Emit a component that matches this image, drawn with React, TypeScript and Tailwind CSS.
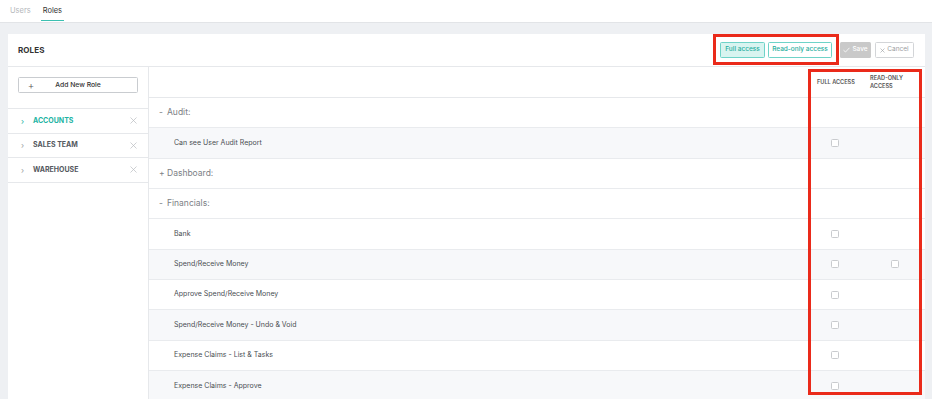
import React from "react";

const teal = "text-[#22b3a3]";

function Checkbox() {
  return <div className="w-[8px] h-[8px] border border-[#c9cbce] rounded-[1.5px] bg-white" />;
}

type Row = { label: string; kind: "group" | "item"; sign?: string; full?: boolean; read?: boolean; stripe?: boolean };

const rows: Row[] = [
  { label: "Audit:", kind: "group", sign: "-" },
  { label: "Can see User Audit Report", kind: "item", full: true, stripe: true },
  { label: "Dashboard:", kind: "group", sign: "+" },
  { label: "Financials:", kind: "group", sign: "-" },
  { label: "Bank", kind: "item", full: true },
  { label: "Spend/Receive Money", kind: "item", full: true, read: true, stripe: true },
  { label: "Approve Spend/Receive Money", kind: "item", full: true },
  { label: "Spend/Receive Money - Undo & Void", kind: "item", full: true, stripe: true },
  { label: "Expense Claims - List & Tasks", kind: "item", full: true },
  { label: "Expense Claims - Approve", kind: "item", full: true, stripe: true },
];

const roles = [
  { name: "ACCOUNTS", active: true },
  { name: "SALES TEAM", active: false },
  { name: "WAREHOUSE", active: false },
];

export default function App() {
  return (
    <div className="w-[932px] h-[399px] overflow-hidden bg-[#eef0f3] font-['Inter',sans-serif]">
      {/* Tabs */}
      <div className="h-[23px] bg-white border-b border-[#e2e4e7] flex items-stretch pl-[10px] gap-[12px]">
        <div className="flex items-center text-[7.5px] text-[#b4b7bb]">Users</div>
        <div className="relative flex items-center text-[7.5px] text-[#333]">
          Roles
          <div className="absolute left-[-2px] right-[-2px] bottom-[1px] h-[1.5px] bg-[#3cc0b2]" />
        </div>
      </div>

      <div className="pl-[8px] pt-[11px]">
        <div className="relative w-[917px] h-[400px] bg-white">
          {/* Header */}
          <div className="h-[33px] border-b border-[#e6e8eb] flex items-center justify-between pl-[10px] pr-[11px]">
            <div className="text-[8px] font-bold text-[#333] tracking-[0.1px]">ROLES</div>
            <div className="flex items-center">
              <div className="w-[45px] h-[16px] flex items-center justify-center rounded-[1.5px] border border-[#6fd3c8] bg-[#d8f4f0] text-[6.5px] font-medium text-[#1fae9e] whitespace-nowrap">Full access</div>
              <div className="ml-[3px] w-[64px] h-[16px] flex items-center justify-center rounded-[1.5px] border border-[#6fd3c8] bg-white text-[6.5px] font-medium text-[#1fae9e] whitespace-nowrap">Read-only access</div>
              <div className="ml-[8px] w-[31px] h-[16px] flex items-center justify-center gap-[2px] rounded-[1.5px] bg-[#c9c9c9] text-[6.5px] font-medium text-white">
                <svg width="7" height="6" viewBox="0 0 7 6"><path d="M0.5 3.2 L2.5 5 L6.5 0.8" stroke="white" strokeWidth="0.8" fill="none" /></svg>
                Save
              </div>
              <div className="ml-[4px] w-[39px] h-[16px] flex items-center justify-center gap-[2px] rounded-[1.5px] border border-[#d3d5d8] bg-white text-[6.5px] text-[#9a9da1]">
                <svg width="5" height="5" viewBox="0 0 5 5"><path d="M0.5 0.5 L4.5 4.5 M4.5 0.5 L0.5 4.5" stroke="#9a9da1" strokeWidth="0.6" /></svg>
                Cancel
              </div>
            </div>
          </div>

          <div className="flex">
            {/* Left panel */}
            <div className="w-[141px] border-r border-[#e6e8eb] h-[340px]">
              <div className="pt-[10px] pl-[10px]">
                <div className="w-[120px] h-[16px] border border-[#c9ccd0] rounded-[1.5px] flex items-center">
                  <span className="w-[24px] text-center text-[10px] leading-none text-[#555] font-light">+</span>
                  <span className="flex-1 text-center pr-[24px] text-[6.8px] font-medium text-[#333]">Add New Role</span>
                </div>
              </div>
              <div className="mt-[15px] border-t border-[#e6e8eb]">
                {roles.map((r) => (
                  <div key={r.name} className="h-[24.5px] border-b border-[#e6e8eb] flex items-center pl-[13px] pr-[11px]">
                    <span className={`text-[8px] w-[12px] ${r.active ? teal : "text-[#9a9da1]"}`}>›</span>
                    <span className={`flex-1 text-[7px] font-bold ${r.active ? teal : "text-[#54585e]"}`}>{r.name}</span>
                    <svg width="7" height="7" viewBox="0 0 7 7"><path d="M0.5 0.5 L6.5 6.5 M6.5 0.5 L0.5 6.5" stroke="#b9bcc0" strokeWidth="0.7" /></svg>
                  </div>
                ))}
              </div>
            </div>

            {/* Right panel */}
            <div className="flex-1">
              <div className="h-[31px] border-b border-[#e6e8eb] flex items-center">
                <div className="flex-1" />
                <div className="w-[53px] pl-[5px] text-[5.6px] font-semibold text-[#555] leading-[8.5px]">FULL ACCESS</div>
                <div className="w-[60px] pl-[5px] text-[5.6px] font-semibold text-[#555] leading-[8.5px]">READ-ONLY<br />ACCESS</div>
              </div>
              {rows.map((r) => (
                <div key={r.label} className={`h-[30.35px] border-b border-[#e9ebee] flex items-center ${r.stripe ? "bg-[#f7f8fa]" : "bg-white"}`}>
                  {r.kind === "group" ? (
                    <div className="flex-1 pl-[10px] text-[8.5px] text-[#7c8085]">
                      <span className="inline-block w-[8px]">{r.sign}</span>{r.label}
                    </div>
                  ) : (
                    <div className="flex-1 pl-[25px] text-[7px] text-[#4a4e53]">{r.label}</div>
                  )}
                  <div className="w-[53px] pl-[19px]">{r.full ? <Checkbox /> : null}</div>
                  <div className="w-[60px] pl-[26px]">{r.read ? <Checkbox /> : null}</div>
                </div>
              ))}
            </div>
          </div>

          {/* Annotation boxes */}
          <div className="absolute left-[705px] top-0 w-[126px] h-[31px] border-[3px] border-[#ea2a1a]" />
          <div className="absolute left-[800px] top-[35px] w-[114px] h-[326px] border-[3px] border-[#ea2a1a]" />
        </div>
      </div>
    </div>
  );
}
